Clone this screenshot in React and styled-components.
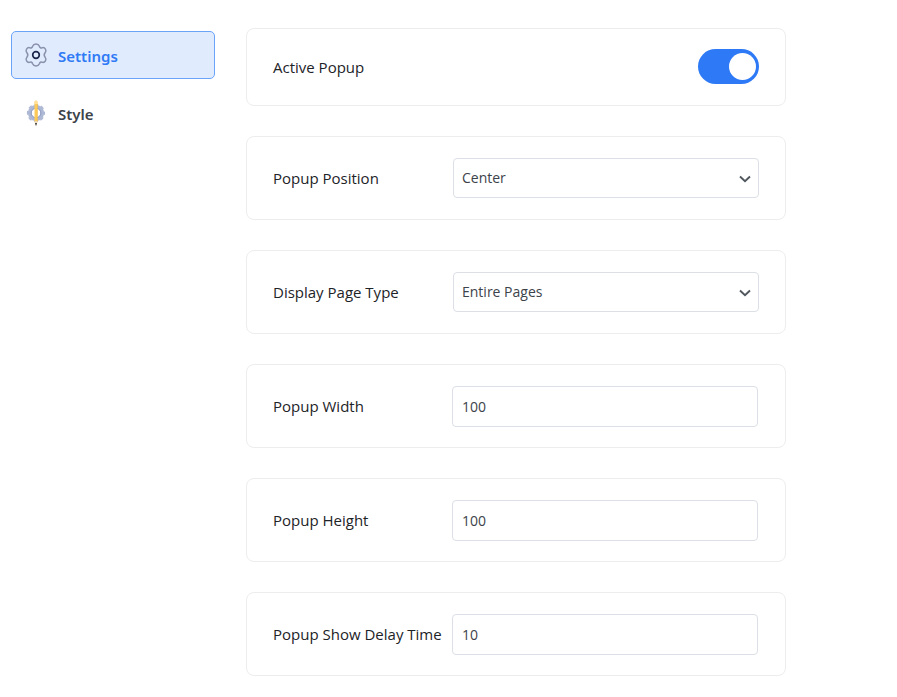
import React, { useState } from "react";
import styled, { createGlobalStyle } from "styled-components";

const GlobalStyle = createGlobalStyle`
  *, *::before, *::after { box-sizing: border-box; }
  body {
    margin: 0;
    background: #fff;
    color: #2c3338;
    font-family: "Open Sans", "Noto Sans", sans-serif;
    font-size: 14px;
  }
`;

const Page = styled.div`
  display: flex;
  align-items: flex-start;
  gap: 31px;
  padding: 28px 111px 20px 11px;
`;

const Sidebar = styled.nav`
  display: flex;
  flex-direction: column;
  flex: 0 0 204px;
  gap: 10px;
  padding-top: 3px;
`;

const TabButton = styled.button`
  display: flex;
  align-items: center;
  gap: 10px;
  height: 48px;
  padding: 2px 12px 0;
  border: 1px solid ${(p) => (p.$active ? "#6ba3f8" : "transparent")};
  border-radius: 5px;
  background: ${(p) => (p.$active ? "#e0ebfe" : "transparent")};
  color: ${(p) => (p.$active ? "#2f7af5" : "#3c434a")};
  font: 600 15px/22px "Noto Sans", sans-serif;
  cursor: pointer;
`;

const TabIcon = styled.svg`
  flex: none;
  width: 24px;
  height: 28px;
  margin-bottom: 3px;
`;

const Cards = styled.form`
  display: flex;
  flex: 1;
  flex-direction: column;
  gap: 30px;
  min-width: 0;
`;

const Card = styled.div`
  display: flex;
  align-items: center;
  justify-content: space-between;
  min-height: ${(p) => (p.$compact ? 78 : 84)}px;
  padding: 0 ${(p) => (p.$text ? 27 : 26)}px ${(p) => (p.$compact ? 1 : 0)}px 26px;
  border: 1px solid #ededee;
  border-radius: 8px;
`;

const Label = styled.label`
  color: #1d2327;
  font-size: 15px;
  font-weight: 500;
  line-height: 20px;
  white-space: nowrap;
`;

const Control = styled.div`
  display: grid;
  flex: 0 1 306px;
  min-width: 0;
  align-items: center;
`;

const TextInput = styled.input`
  width: 100%;
  height: 41px;
  padding: 0 9px;
  border: 1px solid #dcdfe5;
  border-radius: 4px;
  background: #fff;
  color: #3c434a;
  font: 400 14px/20px "Open Sans", sans-serif;
`;

const SelectInput = styled.select`
  grid-area: 1 / 1;
  width: 100%;
  height: 40px;
  padding: 0 32px 0 8px;
  border: 1px solid #dcdfe5;
  border-radius: 4px;
  background: #fff;
  color: #3c434a;
  font: 400 14px/20px "Open Sans", sans-serif;
  appearance: none;
`;

const Chevron = styled.svg`
  grid-area: 1 / 1;
  justify-self: end;
  width: 12px;
  height: 8px;
  margin: 2px 8px 0 0;
  pointer-events: none;
`;

const Switch = styled.input`
  display: grid;
  align-items: center;
  width: 61px;
  height: 35px;
  margin: 0;
  padding: 0 3px;
  border-radius: 18px;
  background: #2e7af6;
  appearance: none;
  cursor: pointer;

  &::before {
    content: "";
    width: 27px;
    height: 27px;
    border-radius: 50%;
    background: #fff;
  }
  &:checked::before { justify-self: end; }
  &:not(:checked) { background: #c3c8d0; }
`;

function SettingsIcon() {
  return (
    <TabIcon viewBox="0 0 24 28" fill="none" aria-hidden="true">
      <path
        d="M8.6 5.2C9.8 2.2 14.2 2.2 15.4 5.2C15.8 6.8 16.8 7.3 18.3 6.7C21 6.1 23 9.4 21.2 11.6C20 13 20 15 21.2 16.4C23 18.6 21 21.9 18.3 21.3C16.8 20.7 15.8 21.2 15.4 22.8C14.2 25.8 9.8 25.8 8.6 22.8C8.2 21.2 7.2 20.7 5.7 21.3C3 21.9 1 18.6 2.8 16.4C4 15 4 13 2.8 11.6C1 9.4 3 6.1 5.7 6.7C7.2 7.3 8.2 6.8 8.6 5.2Z"
        stroke="#8991ab"
        strokeWidth="1.5"
      />
      <circle cx="12" cy="14" r="3.3" stroke="#1c274c" strokeWidth="1.7" />
    </TabIcon>
  );
}

function StyleIcon() {
  return (
    <TabIcon viewBox="0 0 24 28" aria-hidden="true">
      <circle cx="12" cy="14" r="6.3" fill="none" stroke="#adb8d4" strokeWidth="3.6" />
      <circle cx="12" cy="14" r="8.4" fill="none" stroke="#adb8d4" strokeWidth="1.4" strokeDasharray="3.8 2.8" strokeDashoffset="1.9" />
      <circle cx="12" cy="14" r="4.8" fill="none" stroke="#8e9cc2" strokeWidth="1" />
      <path d="M10.5 3Q10.5 1.5 12 1.5T13.5 3V22.5L12 26.5L10.5 22.5Z" fill="#fdcb58" />
      <path d="M10.5 3Q10.5 1.5 12 1.5T13.5 3V5H10.5Z" fill="#ffe19c" />
      <path d="M12.9 5H13.5V22.5H12.9Z" fill="#f5b544" />
      <path d="M10.5 22H13.5L12.8 24.5H11.2Z" fill="#ead8bd" />
      <path d="M11 24H13L12 27.2Z" fill="#343b49" />
    </TabIcon>
  );
}

function SelectField({ id, label, options }) {
  return (
    <Card>
      <Label htmlFor={id}>{label}</Label>
      <Control>
        <SelectInput id={id}>
          {options.map((o) => (
            <option key={o}>{o}</option>
          ))}
        </SelectInput>
        <Chevron viewBox="0 0 12 8" fill="none" aria-hidden="true">
          <path d="M1 1.5L6 6.3L11 1.5" stroke="#50575e" strokeWidth="1.9" />
        </Chevron>
      </Control>
    </Card>
  );
}

function TextField({ id, label, value }) {
  return (
    <Card $text>
      <Label htmlFor={id}>{label}</Label>
      <Control>
        <TextInput id={id} type="text" inputMode="numeric" defaultValue={value} />
      </Control>
    </Card>
  );
}

export default function App() {
  const [tab, setTab] = useState("settings");
  return (
    <>
      <GlobalStyle />
      <Page>
        <Sidebar>
          <TabButton type="button" $active={tab === "settings"} onClick={() => setTab("settings")}>
            <SettingsIcon />
            Settings
          </TabButton>
          <TabButton type="button" $active={tab === "style"} onClick={() => setTab("style")}>
            <StyleIcon />
            Style
          </TabButton>
        </Sidebar>
        <Cards>
          <Card $compact>
            <Label htmlFor="active">Active Popup</Label>
            <Switch id="active" type="checkbox" role="switch" defaultChecked />
          </Card>
          <SelectField id="position" label="Popup Position" options={["Center", "Top", "Bottom"]} />
          <SelectField id="page-type" label="Display Page Type" options={["Entire Pages", "Home Page"]} />
          <TextField id="width" label="Popup Width" value="100" />
          <TextField id="height" label="Popup Height" value="100" />
          <TextField id="delay" label="Popup Show Delay Time" value="10" />
        </Cards>
      </Page>
    </>
  );
}
